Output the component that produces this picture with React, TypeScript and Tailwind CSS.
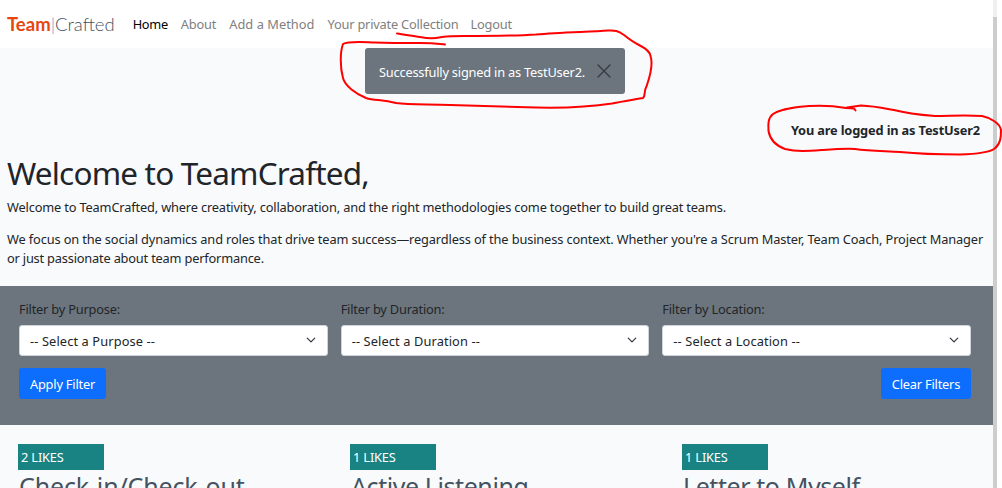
const filters = [
  { label: "Filter by Purpose:", value: "-- Select a Purpose --" },
  { label: "Filter by Duration:", value: "-- Select a Duration --" },
  { label: "Filter by Location:", value: "-- Select a Location --" },
];

const methods = [
  { likes: 2, title: "Check-in/Check-out", tracking: "tracking-[-0.15px]" },
  { likes: 1, title: "Active Listening", tracking: "tracking-[-0.42px]" },
  { likes: 1, title: "Letter to Myself", tracking: "tracking-[-0.42px]" },
];

function Navbar() {
  return (
    <nav className="flex h-12 shrink-0 items-center bg-white pl-[7px]">
      <a className="mr-[18px] font-['Lato',sans-serif] text-[18.5px] leading-6 font-light tracking-normal text-[#445261]">
        <span className="font-bold text-[#e84610]">Team</span>
        <span className="text-[#6c8ebf]">|</span>Crafted
      </a>
      <div className="flex gap-[13px] pt-px text-[#808080]">
        <a className="tracking-[-0.3px] text-black">Home</a>
        <a className="tracking-[-0.2px]">About</a>
        <a className="tracking-[0.05px]">Add a Method</a>
        <a className="tracking-[-0.2px]">Your private Collection</a>
        <a className="ml-[-1px]">Logout</a>
      </div>
    </nav>
  );
}

function Select({ label, value }: { label: string; value: string }) {
  return (
    <div>
      <div className="h-[39px] pt-[14px] tracking-[-0.2px]">{label}</div>
      <div className="flex h-[31px] items-center justify-between rounded-[3px] border border-[#ced4da] bg-white pt-px pr-[11px] pl-[10px]">
        <span className="tracking-[0.12px]">{value}</span>
        <svg className="mb-[2px] h-[10px] w-[10px]" viewBox="0 0 16 16" fill="none" stroke="#343a40" strokeWidth="2" strokeLinecap="round" strokeLinejoin="round">
          <path d="m2 5 6 6 6-6" />
        </svg>
      </div>
    </div>
  );
}

export default function App() {
  return (
    <div className="relative flex h-[488px] w-[1002px] overflow-hidden bg-white font-['Noto_Sans',sans-serif] text-[12.8px] leading-[19px] tracking-[-0.16px] whitespace-nowrap text-[#212529]">
      <div className="flex w-[993px] shrink-0 flex-col bg-[#f9fafc]">
        <Navbar />
        <div className="ml-[-3px] flex h-[46px] w-[260px] shrink-0 items-center justify-between self-center rounded-[3px] bg-[#6c757d] pr-[14px] pl-[14px] text-white">
          <span className="pt-[3px] tracking-[-0.2px]">Successfully signed in as TestUser2.</span>
          <svg className="h-[14px] w-[14px]" viewBox="0 0 14 14" stroke="#363b40" strokeWidth="1.4" strokeLinecap="round">
            <path d="M1 1 13 13M13 1 1 13" />
          </svg>
        </div>
        <div className="mt-[27px] self-end pr-[13px] font-bold tracking-[-0.16px]">You are logged in as TestUser2</div>
        <h1 className="mt-[14px] ml-[7px] h-[44px] text-[31.5px] leading-[38px] tracking-[-0.82px]">Welcome to TeamCrafted,</h1>
        <p className="ml-[7px]">Welcome to TeamCrafted, where creativity, collaboration, and the right methodologies come together to build great teams.</p>
        <p className="mt-[13px] ml-[7px]">
          <span className="block tracking-[-0.127px]">We focus on the social dynamics and roles that drive team success—regardless of the business context. Whether you're a Scrum Master, Team Coach, Project Manager</span>
          <span className="block tracking-[-0.19px]">or just passionate about team performance.</span>
        </p>
        <section className="mt-[18px] h-[139px] shrink-0 bg-[#6c757d] pr-[22px] pl-[19px]">
          <div className="grid grid-cols-3 gap-[13px]">
            {filters.map((f) => (
              <Select key={f.label} label={f.label} value={f.value} />
            ))}
          </div>
          <div className="mt-3 flex justify-between text-white">
            <button className="h-[31px] w-[87px] rounded-[3px] bg-[#0d6efd] pt-[2px] tracking-[-0.2px]">Apply Filter</button>
            <button className="h-[31px] w-[90px] rounded-[3px] bg-[#0d6efd] pt-[2px] tracking-[-0.2px]">Clear Filters</button>
          </div>
        </section>
        <section className="mt-[19px] flex h-11 shrink-0 overflow-hidden pl-[18px]">
          {methods.map((m) => (
            <article key={m.title} className="w-[332px] shrink-0">
              <div className="h-[26px] w-[86px] bg-[#198282] pt-1 pl-[3px] text-white">{m.likes} LIKES</div>
              <h2 className={`mt-[1px] pl-[1px] text-[25px] leading-[31px] text-[#445261] ${m.tracking}`}>{m.title}</h2>
            </article>
          ))}
        </section>
      </div>
      <div className="w-1 shrink-0 bg-[#cdcdcd]">
        <div className="h-[17px] bg-[#f0f0f0]" />
      </div>
      <svg className="pointer-events-none absolute inset-0" width="1002" height="488" fill="none" stroke="#ff0000" strokeWidth="2" strokeLinecap="round" strokeLinejoin="round">
        <path d="M397 33.500C405 35 413 35.500 420 37C430 39 434 38.500 442 37C450 36 456 36 464 36C490 36 515 36 536 34.500C560 32 590 32 608 30.500C615 30 618 31 624 35C629 39 633 42 639 45C645 48 650 52 650.500 56C653 63 650 76 647 85C643 93 646 95 643 98C632 100 624 101 612 103.500C590 107 560 108 536 107.500C510 107 480 106 450 105C430 104 410 105 396 103C382 99 375 101 366 98C356 94 345 86 343 78C340 67 340 52 343 44C348 41 360 42 375 42.500C390 43 405 43 420 43C432 43 440 44 445 44.500" />
        <path d="M855.500 110.500L854 108.500L846 108C835 106 815 105 798 107C786 109 779 110 773 114C768 118 768 124 768.500 131C770 140 777 146 785 149C797 152 809 151 823 150C837 149 845 148.500 855 149C870 151 885 151 900 152C920 154 940 154.500 960 154.500C975 154 988 153 994 149C1001 144 1001 136 1001 130C1000 124 992 118 982 116C965 115 950 116 935 116C922 115 905 113 894 110C883 108 874 106 861 105.500L847 107.500" />
      </svg>
    </div>
  );
}
